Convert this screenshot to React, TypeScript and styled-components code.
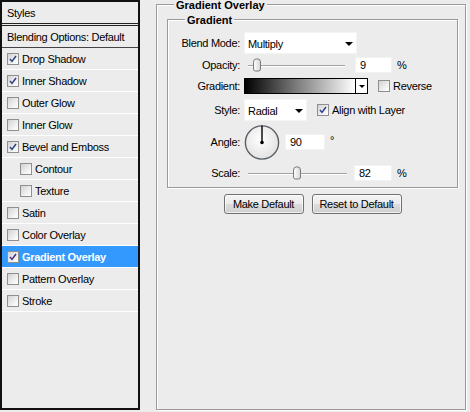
import styled, { createGlobalStyle } from "styled-components";

const GlobalStyle = createGlobalStyle`
  body {
    margin: 0;
    background: #ececec;
    font-family: "Liberation Sans", Arial, sans-serif;
    font-size: 11px;
    letter-spacing: -0.3px;
    color: #000;
  }
`;

const Page = styled.div`
  display: flex;
  align-items: flex-start;
  gap: 16px;
  width: 470px;
  height: 412px;
  background: #ececec;
`;

/* ---------- left list ---------- */

const StylesList = styled.div`
  width: 140px;
  height: 410px;
  box-sizing: border-box;
  border: 2px solid #111;
  display: flex;
  flex-direction: column;
`;

const HeaderRow = styled.div<{ $double?: boolean }>`
  height: 21px;
  display: flex;
  align-items: center;
  padding-left: 5px;
  border-bottom: ${(p) => (p.$double ? "3px double #222" : "1px solid #444")};
  white-space: nowrap;
`;

const StyleRow = styled.div<{ $active?: boolean; $indent?: boolean }>`
  height: 21px;
  display: flex;
  align-items: center;
  gap: 3px;
  padding-left: ${(p) => (p.$indent ? "18px" : "5px")};
  border-bottom: 1px solid #fff;
  background: ${(p) => (p.$active ? "#3399ff" : "transparent")};
  color: ${(p) => (p.$active ? "#fff" : "#000")};
  font-weight: ${(p) => (p.$active ? "bold" : "normal")};
  white-space: nowrap;
`;

const Box = styled.span`
  width: 12px;
  height: 12px;
  box-sizing: border-box;
  flex: none;
  border: 1px solid #8e8f8f;
  background: linear-gradient(135deg, #d2d2d2 0%, #f4f4f4 70%, #fff 100%);
  display: inline-flex;
  align-items: center;
  justify-content: center;
`;

function Check({ checked, active }: { checked?: boolean; active?: boolean }) {
  return (
    <Box>
      {checked ? (
        <svg width="10" height="10" viewBox="0 0 10 10">
          <path
            d="M2 5 L4 7.4 L8 2"
            fill="none"
            stroke={active ? "#4b2a86" : "#2b3f86"}
            strokeWidth="1.5"
          />
        </svg>
      ) : null}
    </Box>
  );
}

/* ---------- right panel ---------- */

const Group = styled.div`
  position: relative;
  box-sizing: border-box;
  border: 1px solid #9a9a9a;
  box-shadow: inset 1px 1px 0 #fff, 1px 1px 0 #fff;
`;

const OuterGroup = styled(Group)`
  margin-top: 4px;
  width: 310px;
  height: 406px;
  padding: 14px 7px 0 10px;
`;

const InnerGroup = styled(Group)`
  width: 291px;
  height: 169px;
  padding-top: 12px;
  display: flex;
  flex-direction: column;
`;

const Legend = styled.span`
  position: absolute;
  top: -6px;
  left: 17px;
  padding: 0 2px;
  line-height: 12px;
  font-weight: bold;
  letter-spacing: 0;
  background: #ececec;
  white-space: nowrap;
`;

const Row = styled.div<{ $h: number; $mt: number }>`
  display: flex;
  align-items: center;
  height: ${(p) => p.$h}px;
  margin-top: ${(p) => p.$mt}px;
  white-space: nowrap;
`;

const Label = styled.span`
  width: 72px;
  margin-right: 4px;
  text-align: right;
  flex: none;
`;

const Select = styled.div<{ $w: number }>`
  width: ${(p) => p.$w}px;
  height: 22px;
  box-sizing: border-box;
  background: #fff;
  border: 1px solid #f4f4f4;
  display: flex;
  align-items: center;
  justify-content: space-between;
  padding: 1px 3px 0 3px;
`;

const Arrow = styled.span<{ $size: number }>`
  width: 0;
  height: 0;
  border-left: ${(p) => p.$size}px solid transparent;
  border-right: ${(p) => p.$size}px solid transparent;
  border-top: ${(p) => p.$size}px solid #000;
`;

const SliderWrap = styled.div<{ $w: number }>`
  position: relative;
  width: ${(p) => p.$w}px;
  height: 16px;
  padding: 0 4px;
  box-sizing: border-box;
  display: flex;
  align-items: center;
`;

const Track = styled.div`
  position: relative;
  flex: 1;
  height: 1px;
  background: #a3a3a3;
  box-shadow: 0 1px 0 #fff;
`;

const Thumb = styled.svg`
  position: absolute;
  top: -7px;
  margin-left: -5px;
`;

function Slider({ width, pos }: { width: number; pos: number }) {
  return (
    <SliderWrap $w={width}>
      <Track>
        <Thumb width="10" height="14" viewBox="0 0 10 14" style={{ left: `${pos}%` }}>
          <defs>
            <linearGradient id="thumbFill" x1="0" y1="0" x2="1" y2="0">
              <stop offset="0" stopColor="#ffffff" />
              <stop offset="1" stopColor="#d6d6d6" />
            </linearGradient>
          </defs>
          <path
            d="M1.5 4 Q1.5 0.8 5 0.8 Q8.5 0.8 8.5 4 V11 Q8.5 13 6.5 13 H3.5 Q1.5 13 1.5 11 Z"
            fill="url(#thumbFill)"
            stroke="#7a7a7a"
            strokeWidth="1"
          />
        </Thumb>
      </Track>
    </SliderWrap>
  );
}

const NumberBox = styled.div<{ $w: number; $gap: number }>`
  width: ${(p) => p.$w}px;
  height: 16px;
  box-sizing: border-box;
  margin-left: ${(p) => p.$gap}px;
  background: #fff;
  border: 1px solid #f2f2f2;
  padding-left: 4px;
  display: flex;
  align-items: center;
`;

const Unit = styled.span`
  margin-left: 5px;
`;

const Degree = styled.span`
  align-self: flex-start;
  margin-top: 11px;
  margin-left: 5px;
`;

const GradientBar = styled.div`
  display: flex;
  height: 16px;
  box-sizing: border-box;
  border: 1px solid #000;
`;

const GradientFill = styled.div`
  width: 110px;
  background: linear-gradient(to right, #000 0%, #777 45%, #fff 100%);
`;

const GradientButton = styled.div`
  width: 11px;
  border-left: 1px solid #000;
  background: #fff;
  display: flex;
  align-items: center;
  justify-content: center;
`;

const Option = styled.label<{ $gap: number }>`
  display: flex;
  align-items: center;
  gap: 3px;
  margin-left: ${(p) => p.$gap}px;
`;

const ButtonBar = styled.div`
  width: 291px;
  margin-top: 6px;
  display: flex;
  justify-content: center;
  gap: 8px;
`;

const Button = styled.button<{ $w: number }>`
  width: ${(p) => p.$w}px;
  height: 20px;
  padding: 0;
  font: inherit;
  letter-spacing: inherit;
  color: #000;
  border: 1px solid #707070;
  border-radius: 3px;
  background: linear-gradient(to bottom, #f3f3f3 0%, #ebebeb 50%, #dcdcdc 51%, #cfcfcf 100%);
  box-shadow: inset 0 0 0 1px rgba(255, 255, 255, 0.7);
`;

function Dial() {
  return (
    <svg width="36" height="37" viewBox="0 0 36 37">
      <defs>
        <radialGradient id="dialFill" cx="0.45" cy="0.4" r="0.6">
          <stop offset="0" stopColor="#ffffff" />
          <stop offset="1" stopColor="#e2e2e2" />
        </radialGradient>
      </defs>
      <circle cx="18" cy="18.5" r="16.6" fill="url(#dialFill)" stroke="#5a5f66" strokeWidth="1.4" />
      <line x1="18" y1="18.5" x2="18" y2="1.5" stroke="#000" strokeWidth="1.4" />
      <circle cx="18" cy="18.5" r="1.8" fill="#000" />
    </svg>
  );
}

const layers = [
  { name: "Drop Shadow", checked: true },
  { name: "Inner Shadow", checked: true },
  { name: "Outer Glow" },
  { name: "Inner Glow" },
  { name: "Bevel and Emboss", checked: true },
  { name: "Contour", indent: true },
  { name: "Texture", indent: true },
  { name: "Satin" },
  { name: "Color Overlay" },
  { name: "Gradient Overlay", checked: true, active: true },
  { name: "Pattern Overlay" },
  { name: "Stroke" },
];

export default function App() {
  return (
    <>
      <GlobalStyle />
      <Page>
        <StylesList>
          <HeaderRow $double>Styles</HeaderRow>
          <HeaderRow>Blending Options: Default</HeaderRow>
          {layers.map((l) => (
            <StyleRow key={l.name} $active={l.active} $indent={l.indent}>
              <Check checked={l.checked} active={l.active} />
              {l.name}
            </StyleRow>
          ))}
        </StylesList>

        <OuterGroup>
          <Legend>Gradient Overlay</Legend>
          <InnerGroup>
            <Legend>Gradient</Legend>
            <Row $h={22} $mt={0}>
              <Label>Blend Mode:</Label>
              <Select $w={113}>
                Multiply
                <Arrow $size={4} />
              </Select>
            </Row>
            <Row $h={20} $mt={1}>
              <Label>Opacity:</Label>
              <Slider width={105} pos={9} />
              <NumberBox $w={37} $gap={6}>9</NumberBox>
              <Unit>%</Unit>
            </Row>
            <Row $h={20} $mt={1}>
              <Label>Gradient:</Label>
              <GradientBar>
                <GradientFill />
                <GradientButton>
                  <Arrow $size={3} />
                </GradientButton>
              </GradientBar>
              <Option $gap={10}>
                <Check />
                Reverse
              </Option>
            </Row>
            <Row $h={22} $mt={3}>
              <Label>Style:</Label>
              <Select $w={63}>
                Radial
                <Arrow $size={4} />
              </Select>
              <Option $gap={10}>
                <Check checked />
                Align with Layer
              </Option>
            </Row>
            <Row $h={38} $mt={2}>
              <Label>Angle:</Label>
              <Dial />
              <NumberBox $w={40} $gap={5}>90</NumberBox>
              <Degree>°</Degree>
            </Row>
            <Row $h={20} $mt={2}>
              <Label>Scale:</Label>
              <Slider width={107} pos={49} />
              <NumberBox $w={38} $gap={3}>82</NumberBox>
              <Unit>%</Unit>
            </Row>
          </InnerGroup>
          <ButtonBar>
            <Button $w={80}>Make Default</Button>
            <Button $w={90}>Reset to Default</Button>
          </ButtonBar>
        </OuterGroup>
      </Page>
    </>
  );
}
